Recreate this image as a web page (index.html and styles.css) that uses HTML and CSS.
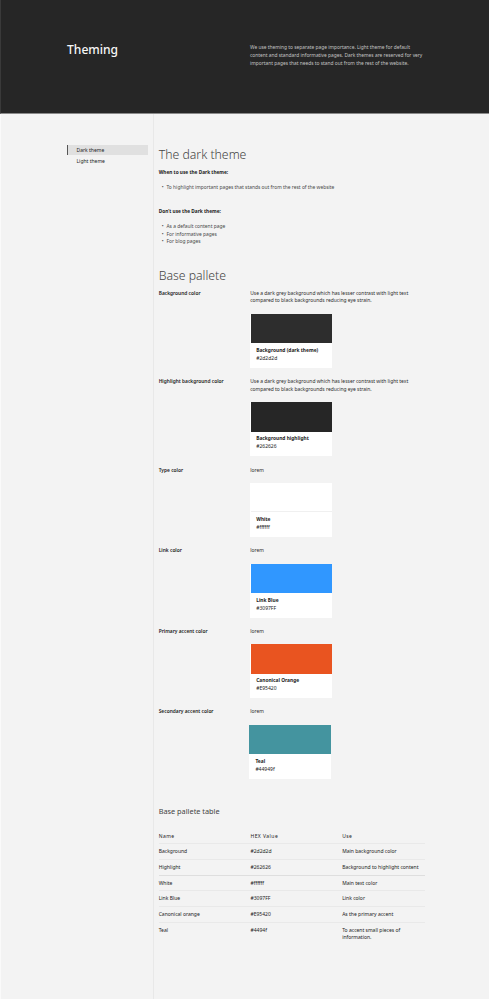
FILE: index.html
```
<!DOCTYPE html>
<html lang="en">
<head>
<meta charset="utf-8">
<title>Theming</title>
<link rel="stylesheet" href="styles.css">
</head>
<body>
<header class="hero">
  <h1>Theming</h1>
  <p>We use theming to separate page importance. Light theme for default<br>content and standard informative pages. Dark themes are reserved for very<br>important pages that needs to stand out from the rest of the website.</p>
</header>
<div class="layout">
  <nav class="side">
    <a class="active">Dark theme</a>
    <a>Light theme</a>
  </nav>
  <main>
    <h2>The dark theme</h2>
    <h3>When to use the Dark theme:</h3>
    <ul><li>To highlight important pages that stands out from the rest of the website</li></ul>
    <h3>Don’t use the Dark theme:</h3>
    <ul><li>As a default content page</li><li>For informative pages</li><li>For blog pages</li></ul>

    <h2 class="palette-title">Base pallete</h2>
    <section class="color">
      <h4>Background color</h4>
      <div><p>Use a dark grey background which has lesser contrast with light text<br>compared to black backgrounds reducing eye strain.</p>
        <div class="card"><div class="swatch background"></div><b>Background (dark theme)</b><span>#2d2d2d</span></div></div>
    </section>
    <section class="color tall">
      <h4>Highlight background color</h4>
      <div><p>Use a dark grey background which has lesser contrast with light text<br>compared to black backgrounds reducing eye strain.</p>
        <div class="card"><div class="swatch highlight"></div><b>Background highlight</b><span>#262626</span></div></div>
    </section>
    <section class="color">
      <h4>Type color</h4>
      <div><p>lorem</p>
        <div class="card"><div class="swatch white"></div><b>White</b><span>#ffffff</span></div></div>
    </section>
    <section class="color">
      <h4>Link color</h4>
      <div><p>lorem</p>
        <div class="card"><div class="swatch blue"></div><b>Link Blue</b><span>#3097FF</span></div></div>
    </section>
    <section class="color">
      <h4>Primary accent color</h4>
      <div><p>lorem</p>
        <div class="card"><div class="swatch orange"></div><b>Canonical Orange</b><span>#E95420</span></div></div>
    </section>
    <section class="color">
      <h4>Secondary accent color</h4>
      <div><p>lorem</p>
        <div class="card teal-card"><div class="swatch teal"></div><b>Teal</b><span>#44949f</span></div></div>
    </section>

    <h5>Base pallete table</h5>
    <div class="table">
      <div class="row head"><span>Name</span><span>HEX Value</span><span>Use</span></div>
      <div class="row"><span>Background</span><span>#2d2d2d</span><span>Main background color</span></div>
      <div class="row"><span>Highlight</span><span>#262626</span><span>Background to highlight content</span></div>
      <div class="row"><span>White</span><span>#ffffff</span><span>Main text color</span></div>
      <div class="row"><span>Link Blue</span><span>#3097FF</span><span>Link color</span></div>
      <div class="row"><span>Canonical orange</span><span>#E95420</span><span>As the primary accent</span></div>
      <div class="row"><span>Teal</span><span>#4494f</span><span>To accent small pieces of<br>information.</span></div>
    </div>
  </main>
</div>
</body>
</html>
```
FILE: styles.css
```
* { box-sizing: border-box; margin: 0; padding: 0; }
body {
  background: #f3f3f3;
  color: #222;
  font: 5px/7.8px "Noto Sans", "Open Sans", sans-serif;
  height: 999px;
  display: flex;
  flex-direction: column;
  overflow: hidden;
}
.hero {
  height: 114px;
  flex: none;
  background: #262626;
  border-bottom: 1px solid #8a8a8a;
  border-left: 1px solid #3a3a3a;
  display: grid;
  grid-template-columns: 183px 1fr;
  padding: 44px 0 0 66px;
  white-space: nowrap;
}
h1 { font-size: 12.1px; line-height: 13px; font-weight: 500; color: #f7f7f7; margin-top: -1.5px; }
.hero p { font-size: 4.87px; color: #c4c4c4; }
.layout { flex: 1; display: grid; grid-template-columns: 153px 1fr; border-left: 1px solid #fafafa; }
.side { padding: 31px 6px 0 65.5px; display: flex; flex-direction: column; }
.side a { height: 10px; line-height: 10px; padding-left: 10px; }
.side .active { background: #e0e0e0; border-left: 1px solid #555; padding-left: 9px; }
.side a + a { margin-top: .5px; }
main { border-left: 1px solid #e8e8e8; margin-left: -1px; padding: 31.5px 0 0 4.7px; white-space: nowrap; }
h2 { font-size: 12.26px; line-height: 18px; height: 22.5px; font-weight: 300; color: #444; }
h3 { font-size: 4.77px; line-height: 8px; height: 16px; font-weight: 700; }
ul { list-style: none; font-size: 4.9px; color: #484848; margin-bottom: 15px; }
li { padding-left: 7.8px; display: flex; }
li::before { content: "•"; width: 4.7px; margin-left: -4.7px; }
.palette-title { margin-top: 21px; }
.color { display: grid; grid-template-columns: 91.5px 1fr; height: 80.6px; }
.color:first-of-type, .color.tall { height: 88.5px; }
h4 { font-size: 4.87px; line-height: 7.8px; font-weight: 600; }
.color p { font-size: 4.95px; color: #2b2b2b; }
.card { width: 82px; height: 54px; background: #fff; margin-top: 8.6px; display: flex; flex-direction: column; font-variant-ligatures: none; }
.teal-card { margin-left: -.8px; }
.card b { font-size: 4.86px; font-weight: 700; padding: 2.8px 0 0 6px; line-height: 8px; }
.card span { padding-left: 6px; line-height: 8px; }
.swatch { height: 29.3px; flex: none; margin-left: .7px; }
.teal-card .swatch { margin-left: 0; }
.background { background: #2d2d2d; }
.highlight { background: #262626; }
.white { background: #fff; border-bottom: 1px solid #f0f0f0; }
.blue { background: #3097ff; }
.orange { background: #e95420; }
.teal { background: #44949f; }
h5 { font-size: 7.33px; line-height: 10px; font-weight: 400; color: #444; margin-top: 17px; height: 21.5px; }
.table { width: 266px; font-variant-ligatures: none; }
.row { display: grid; grid-template-columns: 91.8px 91.7px 1fr; height: 15.7px; padding-top: 4px; border-top: 1px solid #e9e9e9; }
.row:nth-child(4) { border-top-color: #dedede; }
.row.head { border-top-color: transparent; }
.row.head span { letter-spacing: .45px; }
```
